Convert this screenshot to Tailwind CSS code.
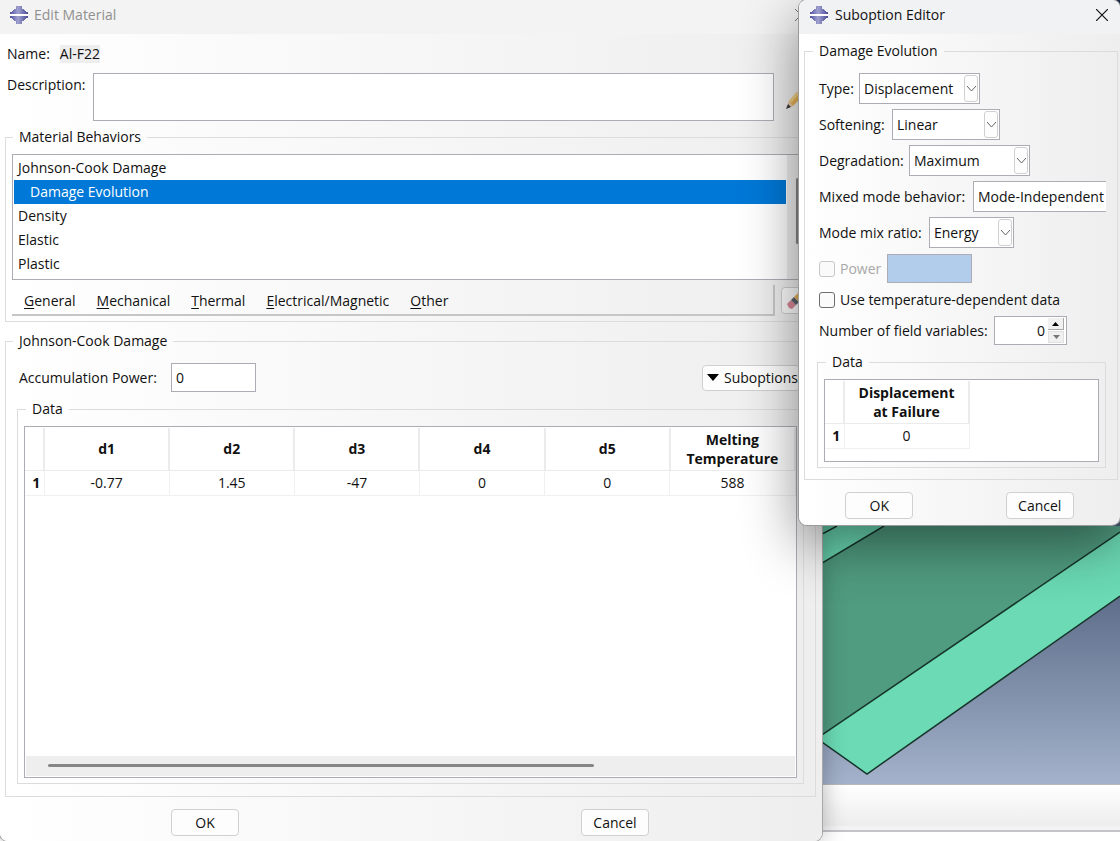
<!DOCTYPE html>
<html lang="en">
<head>
  <meta charset="UTF-8">
  <meta name="viewport" content="width=device-width, initial-scale=1.0">
  <title>Edit Material</title>
  <script src="https://cdn.jsdelivr.net/npm/@tailwindcss/browser@4"></script>
</head>
<body class="relative h-screen overflow-hidden bg-white font-['Open_Sans','Noto_Sans',sans-serif] text-sm leading-5 text-[#111]">

  <!-- Viewport behind the dialogs -->
  <div class="flex h-full flex-col">
    <div class="relative flex-1 bg-linear-to-b from-[#1b2b48] from-50% to-[#a4b2cb]">
      <svg class="absolute right-0 bottom-0 h-[258px] w-[298px]" viewBox="0 0 298 258" fill="none">
        <path d="M0 0H298V70L45 248L0 216Z" fill="#6bdab5"/>
        <path d="M62 0H298V6L0 209V37Z" fill="#509c81"/>
        <path d="M0 37L62 0M0 8L15 0M0 209L298 6M298 70L45 248L0 216" stroke="#17352b" stroke-width="1.5"/>
      </svg>
    </div>
    <div class="h-[42px] border-t border-[#b8b8b8] bg-linear-to-b from-white to-[#ededed]"></div>
    <div class="h-[6px] border-b-2 border-[#c4c4c8] bg-[#f3f3f3]"></div>
    <div class="h-[9px] bg-white"></div>
  </div>

  <!-- Edit Material -->
  <section class="absolute inset-y-0 left-0 right-[298px] flex flex-col overflow-hidden rounded-b-lg bg-linear-to-r from-white to-[#eeeeee] shadow-[0_0_0_1px_#a8a8a8,0_0_24px_rgba(0,0,0,0.3)]">
    <header class="flex h-[34px] shrink-0 items-center bg-[#f3f3f3] pr-[15px] pb-1 pl-[10px] text-[#909090]">
      <svg class="mr-[6px] size-[18px]" viewBox="0 0 18 18">
        <defs>
          <linearGradient id="logo" x2="1">
            <stop stop-color="#5052a0"/>
            <stop offset="0.45" stop-color="#a0a1cf"/>
            <stop offset="1" stop-color="#484a96"/>
          </linearGradient>
        </defs>
        <path d="M6 0h6v3h2v1h1v1h1v1h2v2H0V6h2V5h1V4h1V3h2zM0 10h18v2h-2v1h-1v1h-1v1h-2v3H6v-3H4v-1H3v-1H2v-1H0z" fill="url(#logo)"/>
        <path d="M0 8h18v2H0z" fill="#fff"/>
      </svg>
      <h1 class="flex-1">Edit Material</h1>
      <button type="button" aria-label="Close" class="text-[#777]">
        <svg class="size-3" viewBox="0 0 12 12" fill="none" stroke="currentColor"><path d="M0 0L12 12M12 0L0 12"/></svg>
      </button>
    </header>

    <div class="flex flex-1 flex-col pr-[6px] pb-[6px] pl-[5px]">
      <div class="mt-[10px] flex items-center gap-[10px] pl-[2px]">
        <span>Name:</span>
        <span class="bg-[#eeeeee] leading-[18px]">Al-F22</span>
      </div>
      <div class="mt-[9px] flex pr-[13px] pl-[2px]">
        <label for="description" class="w-[86px] pt-[2px]">Description:</label>
        <textarea id="description" class="h-12 flex-1 resize-none border border-[#acacb4] bg-white px-1 outline-none"></textarea>
        <button type="button" aria-label="Edit description" class="ml-3 self-end pb-3">
          <svg class="h-[18px] w-[17px]" viewBox="0 0 17 18">
            <path d="M1 17L3 10L11 1L16 6L7 15Z" fill="#e6b356"/>
            <path d="M3 10L11 1L13 3L5 12Z" fill="#f3d184"/>
            <path d="M1 17L3 10L7 15Z" fill="#e8c8ae"/>
            <path d="M0 18L2 13L5 16Z" fill="#3b3b3b"/>
          </svg>
        </button>
      </div>

      <fieldset class="mt-[6px] border border-[#dcdcdc] pr-[7px] pb-[5px] pl-[6px]">
        <legend class="ml-px px-[6px]">Material Behaviors</legend>
        <div class="mt-[7px] flex border border-[#acacb4] bg-white">
          <ul class="flex-1 pt-px pb-[3px] pl-px leading-6">
            <li class="pl-1">Johnson-Cook Damage</li>
            <li class="bg-[#0078d7] pl-4 text-white">Damage Evolution</li>
            <li class="pl-1">Density</li>
            <li class="pl-1">Elastic</li>
            <li class="pl-1">Plastic</li>
          </ul>
          <div class="ml-px w-5 bg-[#eeeeee] pt-[23px] pl-[9px]">
            <div class="h-[66px] w-[3px] rounded bg-[#858585]"></div>
          </div>
        </div>
        <div class="mt-[5px] flex items-stretch">
          <nav class="flex flex-1 items-center gap-[21px] border-r-2 border-b-2 border-[#c6c6c6] pt-[2px] pl-3">
            <button type="button"><u class="underline-offset-2">G</u>eneral</button>
            <button type="button"><u class="underline-offset-2">M</u>echanical</button>
            <button type="button"><u class="underline-offset-2">T</u>hermal</button>
            <button type="button"><u class="underline-offset-2">E</u>lectrical/Magnetic</button>
            <button type="button"><u class="underline-offset-2">O</u>ther</button>
          </nav>
          <button type="button" aria-label="Delete behavior" class="my-[2px] ml-[6px] flex h-[27px] w-[27px] items-center justify-center rounded border border-[#d0d0d0] bg-[#fdfdfd]">
            <svg class="size-[18px]" viewBox="0 0 18 18">
              <path d="M1 12L5 8L10 13L6 17L3 16Z" fill="#d98795"/>
              <path d="M5 8L8 5L13 10L10 13Z" fill="#5b626b"/>
              <path d="M8 5L13 0L18 5L13 10Z" fill="#e5b25c"/>
            </svg>
          </button>
        </div>
      </fieldset>

      <fieldset class="mt-[9px] flex flex-1 flex-col border border-[#dcdcdc] pr-[11px] pb-3 pl-[11px]">
        <legend class="-ml-1 px-[6px]">Johnson-Cook Damage</legend>
        <div class="mt-3 flex items-center pr-1 pl-[2px]">
          <label for="power" class="w-[152px]">Accumulation Power:</label>
          <input id="power" type="text" value="0" class="h-[29px] w-[85px] border border-[#acacb4] bg-white px-1 outline-none">
          <button type="button" class="ml-auto flex h-[26px] w-[98px] items-center gap-[5px] rounded border border-[#d0d0d0] bg-[#fdfdfd] pl-1">
            <svg class="h-[7px] w-3" viewBox="0 0 12 7"><path d="M0 0H12L6 7Z" fill="#000"/></svg>
            Suboptions
          </button>
        </div>
        <fieldset class="mt-[7px] flex flex-1 flex-col border border-[#dcdcdc] pr-[6px] pb-[5px] pl-[6px]">
          <legend class="ml-[2px] px-[6px]">Data</legend>
          <div class="mt-[7px] flex h-[352px] min-h-0 flex-col border border-[#acacb4] bg-white">
            <table class="mt-px w-full table-fixed border-collapse text-center">
              <colgroup><col class="w-[19px]"><col><col><col><col><col><col></colgroup>
              <thead>
                <tr class="h-[42px] leading-[19px] [&>th]:border-r-2 [&>th]:border-b [&>th]:border-[#ebebeb]">
                  <th></th>
                  <th scope="col">d1</th>
                  <th scope="col">d2</th>
                  <th scope="col">d3</th>
                  <th scope="col">d4</th>
                  <th scope="col">d5</th>
                  <th scope="col">Melting<br>Temperature</th>
                </tr>
              </thead>
              <tbody>
                <tr class="h-[25px] [&>*]:border-r [&>*]:border-b [&>*]:border-[#f0f0f0]">
                  <th scope="row" class="pl-1">1</th>
                  <td>-0.77</td>
                  <td>1.45</td>
                  <td>-47</td>
                  <td>0</td>
                  <td>0</td>
                  <td>588</td>
                </tr>
              </tbody>
            </table>
            <div class="mx-px mt-auto mb-px h-5 bg-[#eeeeee] pt-2 pl-[22px]">
              <div class="h-[3px] w-[546px] rounded bg-[#858585]"></div>
            </div>
          </div>
        </fieldset>
      </fieldset>

      <div class="mt-3 -mr-1 -ml-[5px] grid grid-cols-2 justify-items-center">
        <button type="button" class="h-[27px] w-[68px] rounded border border-[#d0d0d0] bg-[#fdfdfd]">OK</button>
        <button type="button" class="h-[27px] w-[68px] rounded border border-[#d0d0d0] bg-[#fdfdfd]">Cancel</button>
      </div>
    </div>
  </section>

  <!-- Suboption Editor -->
  <section class="absolute top-0 right-0 w-[321px] rounded-lg bg-linear-to-r from-white to-[#eeeeee] shadow-[0_0_0_1px_#9a9a9a,0_18px_56px_rgba(0,0,0,0.46)]">
    <header class="flex h-[34px] items-center rounded-t-lg bg-[#f1f2f4] pr-3 pb-1 pl-[11px]">
      <svg class="mr-[7px] size-[18px]" viewBox="0 0 18 18">
        <path d="M6 0h6v3h2v1h1v1h1v1h2v2H0V6h2V5h1V4h1V3h2zM0 10h18v2h-2v1h-1v1h-1v1h-2v3H6v-3H4v-1H3v-1H2v-1H0z" fill="url(#logo)"/>
        <path d="M0 8h18v2H0z" fill="#fff"/>
      </svg>
      <h2 class="flex-1">Suboption Editor</h2>
      <button type="button" aria-label="Close">
        <svg class="size-3" viewBox="0 0 12 12" fill="none" stroke="#111" stroke-width="1.2"><path d="M0 0L12 12M12 0L0 12"/></svg>
      </button>
    </header>

    <div class="pt-[7px] pr-[2px] pb-[6px] pl-[5px]">
      <fieldset class="min-w-0 border border-[#dcdcdc] pr-[11px] pb-[11px] pl-[12px]">
        <legend class="-ml-1 px-[6px]">Damage Evolution</legend>
        <div class="mt-3 flex flex-col gap-[5px] pl-[2px]">
          <div class="flex items-center">
            <label for="type" class="w-10">Type:</label>
            <span class="relative">
              <select id="type" class="h-[31px] w-[121px] appearance-none border border-[#acacb4] bg-white px-1 outline-none"><option>Displacement</option></select>
              <span class="pointer-events-none absolute top-[2px] right-[2px] flex h-[27px] w-[14px] items-center justify-center rounded-[3px] border border-[#d0d0d0] bg-[#fdfdfd]">
                <svg class="h-[6px] w-[11px] shrink-0" viewBox="0 0 11 6" fill="none" stroke="#666"><path d="M1 0L5.500 5L10 0"/></svg>
              </span>
            </span>
          </div>
          <div class="flex items-center">
            <label for="softening" class="w-[73px]">Softening:</label>
            <span class="relative">
              <select id="softening" class="h-[31px] w-[108px] appearance-none border border-[#acacb4] bg-white px-1 outline-none"><option>Linear</option></select>
              <span class="pointer-events-none absolute top-[2px] right-[2px] flex h-[27px] w-[14px] items-center justify-center rounded-[3px] border border-[#d0d0d0] bg-[#fdfdfd]">
                <svg class="h-[6px] w-[11px] shrink-0" viewBox="0 0 11 6" fill="none" stroke="#666"><path d="M1 0L5.500 5L10 0"/></svg>
              </span>
            </span>
          </div>
          <div class="flex items-center">
            <label for="degradation" class="w-[90px]">Degradation:</label>
            <span class="relative">
              <select id="degradation" class="h-[31px] w-[121px] appearance-none border border-[#acacb4] bg-white px-1 outline-none"><option>Maximum</option></select>
              <span class="pointer-events-none absolute top-[2px] right-[2px] flex h-[27px] w-[14px] items-center justify-center rounded-[3px] border border-[#d0d0d0] bg-[#fdfdfd]">
                <svg class="h-[6px] w-[11px] shrink-0" viewBox="0 0 11 6" fill="none" stroke="#666"><path d="M1 0L5.500 5L10 0"/></svg>
              </span>
            </span>
          </div>
          <div class="flex items-center">
            <label for="mixed" class="w-[154px] shrink-0 whitespace-nowrap">Mixed mode behavior:</label>
            <select id="mixed" class="h-[31px] min-w-0 flex-1 appearance-none border border-r-0 border-[#acacb4] bg-white pl-1 outline-none"><option>Mode-Independent</option></select>
          </div>
          <div class="flex items-center">
            <label for="ratio" class="w-[110px]">Mode mix ratio:</label>
            <span class="relative">
              <select id="ratio" class="h-[31px] w-[85px] appearance-none border border-[#acacb4] bg-white px-1 outline-none"><option>Energy</option></select>
              <span class="pointer-events-none absolute top-[2px] right-[2px] flex h-[27px] w-[14px] items-center justify-center rounded-[3px] border border-[#d0d0d0] bg-[#fdfdfd]">
                <svg class="h-[6px] w-[11px] shrink-0" viewBox="0 0 11 6" fill="none" stroke="#666"><path d="M1 0L5.500 5L10 0"/></svg>
              </span>
            </span>
          </div>
          <div class="mt-px flex items-center text-[#a8a8a8]">
            <input id="use-power" type="checkbox" disabled class="mr-[5px] size-4 appearance-none rounded-[3px] border border-[#c8c8c8] bg-[#fafafa]">
            <label for="use-power" class="w-[47px]">Power</label>
            <input type="text" disabled aria-label="Power value" class="h-[29px] w-[85px] border border-[#acacb4] bg-[#b1cdeb]">
          </div>
          <div class="flex items-center">
            <input id="temp" type="checkbox" class="mr-[5px] size-4 appearance-none rounded-[3px] border border-[#6e6e6e] bg-[#fafafa]">
            <label for="temp" class="whitespace-nowrap leading-[23px]">Use temperature-dependent data</label>
          </div>
          <div class="flex items-center">
            <label for="fields" class="w-[175px] whitespace-nowrap">Number of field variables:</label>
            <div class="flex h-[29px] w-[73px] items-center border border-[#acacb4] bg-white pr-[2px]">
              <input id="fields" type="number" value="0" class="w-full min-w-0 flex-1 [appearance:textfield] pr-[3px] text-right outline-none [&::-webkit-inner-spin-button]:appearance-none">
              <div class="flex flex-col gap-px">
                <button type="button" aria-label="Increase" class="flex h-3 w-4 items-center justify-center border-r border-b border-[#a8a8a8] bg-[#f0f0f0]">
                  <svg class="h-1 w-[7px]" viewBox="0 0 7 4"><path d="M0 4H7L3.500 0Z" fill="#000"/></svg>
                </button>
                <button type="button" aria-label="Decrease" class="flex h-3 w-4 items-center justify-center border border-[#e0e0e0] bg-[#f0f0f0]">
                  <svg class="h-1 w-[7px]" viewBox="0 0 7 4"><path d="M0 0H7L3.500 4Z" fill="#777"/></svg>
                </button>
              </div>
            </div>
          </div>
        </div>
        <fieldset class="mt-[7px] border border-[#dcdcdc] pr-[6px] pb-[5px] pl-[6px]">
          <legend class="ml-[2px] px-[6px]">Data</legend>
          <div class="mt-[7px] h-[83px] border border-[#acacb4] bg-white pt-px">
            <table class="w-[145px] table-fixed border-collapse text-center">
              <colgroup><col class="w-[19px]"><col></colgroup>
              <thead>
                <tr class="h-[42px] leading-[19px] [&>th]:border-r-2 [&>th]:border-b [&>th]:border-[#ebebeb]">
                  <th></th>
                  <th scope="col">Displacement<br>at Failure</th>
                </tr>
              </thead>
              <tbody>
                <tr class="h-[25px] [&>*]:border-r [&>*]:border-b [&>*]:border-[#f0f0f0]">
                  <th scope="row" class="pl-1">1</th>
                  <td>0</td>
                </tr>
              </tbody>
            </table>
          </div>
        </fieldset>
      </fieldset>

      <div class="mt-3 -mr-[2px] -ml-[5px] grid grid-cols-2 justify-items-center">
        <button type="button" class="h-[27px] w-[68px] rounded border border-[#d0d0d0] bg-[#fdfdfd]">OK</button>
        <button type="button" class="h-[27px] w-[68px] rounded border border-[#d0d0d0] bg-[#fdfdfd]">Cancel</button>
      </div>
    </div>
  </section>
</body>
</html>
